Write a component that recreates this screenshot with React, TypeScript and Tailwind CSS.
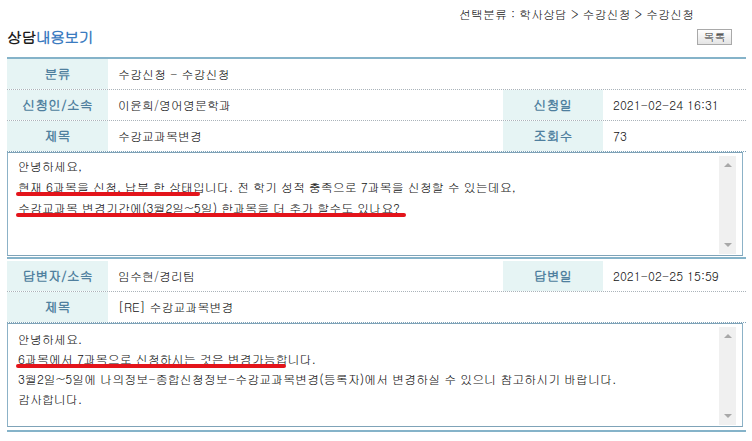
import type { ReactNode } from "react";

const KR = "font-['Gulim','Dotum','Noto_Sans_CJK_KR',sans-serif]";

function Label({ children }: { children: ReactNode }) {
  return (
    <div className="flex items-center justify-center bg-[#e6f4f4] text-[13px] font-bold text-[#4f7f9e]">
      {children}
    </div>
  );
}

function Value({ children, wide }: { children: ReactNode; wide?: boolean }) {
  return (
    <div
      className={`flex items-center pl-[10px] text-[12px] text-[#111] ${
        wide ? "col-span-3" : ""
      }`}
    >
      {children}
    </div>
  );
}

function Row({ children, last }: { children: ReactNode; last?: boolean }) {
  return (
    <div
      className={`grid h-[31px] grid-cols-[101px_395px_100px_143px] border-b border-dotted ${
        last ? "border-[#7fa3b8]" : "border-[#aab3ba]"
      }`}
    >
      {children}
    </div>
  );
}

function Scrollbar() {
  return (
    <div className="mb-[1px] mr-[6px] mt-[3px] flex w-[17px] flex-col items-center justify-between bg-[#f0f0f0] py-[7px]">
      <div className="h-0 w-0 border-x-[4px] border-b-[4px] border-x-transparent border-b-[#a8a8a8]" />
      <div className="h-0 w-0 border-x-[4px] border-t-[4px] border-x-transparent border-t-[#a8a8a8]" />
    </div>
  );
}

// red marker strokes drawn over the text
function Mark({ top, width }: { top: number; width: number }) {
  return (
    <div
      className="absolute left-[8px] h-[3.5px] rounded-full bg-[#e3141b]"
      style={{ top, width }}
    />
  );
}

function ContentBox({
  lines,
  marks,
  leading,
  padTop,
}: {
  lines: string[];
  marks: { top: number; width: number }[];
  leading: string;
  padTop: string;
}) {
  return (
    <div className="relative flex h-[104px] w-[736px] border-x border-y border-x-[#8cb2c7] border-y-[#7fa3b8] border-y-dotted border-x-solid">
      <div className={`flex-1 pl-[10px] text-[12px] text-[#111] ${leading} ${padTop}`}>
        {lines.map((l) => (
          <div key={l}>{l}</div>
        ))}
      </div>
      <Scrollbar />
      {marks.map((m) => (
        <Mark key={m.top} top={m.top} width={m.width} />
      ))}
    </div>
  );
}

export default function App() {
  return (
    <div className={`h-[441px] w-[752px] overflow-hidden bg-white ${KR}`}>
      <div className="mx-[7px] w-[739px]">
        {/* breadcrumb */}
        <div className="flex h-[22px] justify-end pr-[52px] pt-[7px] text-[12px] leading-[14px] text-[#222]">
          선택분류 : 학사상담 &gt; 수강신청 &gt; 수강신청
        </div>

        {/* title + list button */}
        <div className="flex h-[35px] items-start justify-between">
          <h1 className="mt-[6px] text-[15px] font-bold leading-[18px] tracking-[-0.6px] text-[#1a1a1a]">
            상담<span className="text-[#3b7bbf]">내용보기</span>
          </h1>
          <button
            type="button"
            className="mr-[14px] mt-[7px] h-[16px] w-[35px] border border-[#a9a9a9] bg-gradient-to-b from-white to-[#e4e4e4] text-[11px] leading-[14px] text-[#333]"
          >
            목록
          </button>
        </div>

        {/* question */}
        <div className="border-b-2 border-t-2 border-[#85b3c9] pb-[1px]">
          <Row>
            <Label>분류</Label>
            <Value wide>수강신청 - 수강신청</Value>
          </Row>
          <Row>
            <Label>신청인/소속</Label>
            <Value>이윤희/영어영문학과</Value>
            <Label>신청일</Label>
            <Value>2021-02-24 16:31</Value>
          </Row>
          <Row last>
            <Label>제목</Label>
            <Value>수강교과목변경</Value>
            <Label>조회수</Label>
            <Value>73</Value>
          </Row>
          <ContentBox
            leading="leading-[21px]"
            padTop="pt-[2px]"
            lines={[
              "안녕하세요,",
              "현재 6과목을 신청, 납부 한 상태입니다. 전 학기 성적 충족으로 7과목을 신청할 수 있는데요,",
              "수강교과목 변경기간에(3월2일~5일) 한과목을 더 추가 할수도 있나요?",
            ]}
            marks={[
              { top: 39, width: 184 },
              { top: 60, width: 390 },
            ]}
          />
        </div>

        {/* answer */}
        <div className="mt-[2px] border-b-2 border-[#85b3c9] pb-[3px]">
          <Row>
            <Label>답변자/소속</Label>
            <Value>임수현/경리팀</Value>
            <Label>답변일</Label>
            <Value>2021-02-25 15:59</Value>
          </Row>
          <Row last>
            <Label>제목</Label>
            <Value wide>[RE] 수강교과목변경</Value>
          </Row>
          <ContentBox
            leading="leading-[20px]"
            padTop="pt-[5px]"
            lines={[
              "안녕하세요.",
              "6과목에서 7과목으로 신청하시는 것은 변경가능합니다.",
              "3월2일~5일에 나의정보-종합신청정보-수강교과목변경(등록자)에서 변경하실 수 있으니 참고하시기 바랍니다.",
              "감사합니다.",
            ]}
            marks={[{ top: 40, width: 270 }]}
          />
        </div>
      </div>
    </div>
  );
}
